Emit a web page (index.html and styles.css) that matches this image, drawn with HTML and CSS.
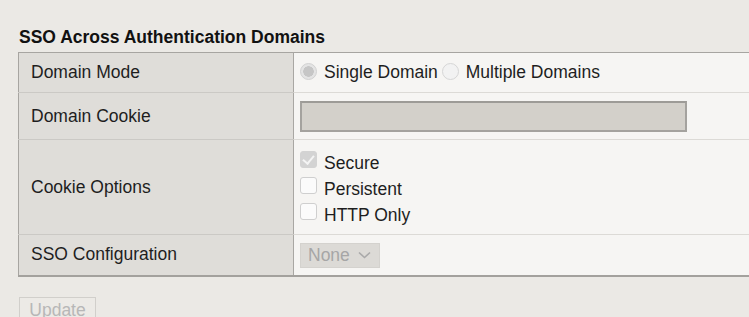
FILE: index.html
```html
<!DOCTYPE html>
<html lang="en">

<head>
    <meta charset="UTF-8">
    <meta name="viewport" content="width=device-width, initial-scale=1.0">
    <title>SSO Across Authentication Domains</title>
    <link rel="stylesheet" href="styles.css">
</head>

<body>
    <div class="section">
        <h2 class="section_title">SSO Across Authentication Domains</h2>

        <table class="settings">
            <tr class="row_mode">
                <th>Domain Mode</th>
                <td>
                    <label class="opt"><input type="radio" name="mode" checked disabled>Single Domain</label>
                    <label class="opt"><input type="radio" name="mode" disabled>Multiple Domains</label>
                </td>
            </tr>
            <tr class="row_cookie">
                <th>Domain Cookie</th>
                <td><input type="text" class="text_field" disabled></td>
            </tr>
            <tr class="row_options">
                <th>Cookie Options</th>
                <td>
                    <label class="check"><input type="checkbox" checked disabled>Secure</label>
                    <label class="check"><input type="checkbox" disabled>Persistent</label>
                    <label class="check"><input type="checkbox" disabled>HTTP Only</label>
                </td>
            </tr>
            <tr class="row_config">
                <th>SSO Configuration</th>
                <td>
                    <span class="select_box">None
                        <svg width="13" height="8" viewBox="0 0 13 8"><path d="M1 1.5 L6.5 6.5 L12 1.5" fill="none" stroke="#a9a9a9" stroke-width="1.6"/></svg>
                    </span>
                </td>
            </tr>
        </table>

        <button class="update_btn" disabled>Update</button>
    </div>
</body>

</html>
```

FILE: styles.css
```css
* {
    padding: 0;
    margin: 0;
    box-sizing: border-box;
}

html {
    overflow: hidden;
}

body {
    background-color: #ebe9e5;
    font-family: "Liberation Sans", Arial, sans-serif;
    font-size: 17.5px;
    color: #1e1e1e;
}

.section {
    padding: 27px 0 0 18px;
}

.section_title {
    font-size: 17.5px;
    line-height: 20px;
    font-weight: bold;
    color: #111;
    padding-left: 1px;
    margin-bottom: 5px;
}

.settings {
    width: 780px;
    border-collapse: collapse;
    border: 1px solid #a7a5a1;
    border-bottom: 2px solid #a3a19d;
}

.settings th {
    width: 275px;
    text-align: left;
    font-weight: normal;
    background-color: #dfddd9;
    padding: 0 12px;
    border-right: 1px solid #a9a7a3;
    border-bottom: 1px solid #cbc9c5;
}

.settings td {
    background-color: #f6f5f3;
    padding: 0 6px;
    border-bottom: 1px solid #dcdad6;
}

.row_mode th,
.row_mode td {
    height: 40px;
}

.row_mode td {
    padding-top: 2px;
}

.row_cookie th,
.row_cookie td {
    height: 47px;
}

.row_options th,
.row_options td {
    height: 95px;
}

.row_options td {
    padding-top: 4px;
}

.row_config th,
.row_config td {
    height: 41px;
    border-bottom: none;
}

.opt {
    display: inline-flex;
    align-items: center;
}

.opt input {
    appearance: none;
    width: 17px;
    height: 17px;
    border-radius: 50%;
    border: 1px solid #d6d6d6;
    background-color: #f2f2f2;
    margin: -3px 7px 0 0;
    position: relative;
}

.opt + .opt {
    margin-left: -1px;
}

.opt input:checked {
    background: radial-gradient(circle, #c6c6c6 0, #c6c6c6 5px, #e4e4e4 5.5px);
    border-color: #d2d2d2;
}

.text_field {
    display: block;
    width: 387px;
    height: 31px;
    background-color: #d3d0ca;
    border: 2px solid #a4a29e;
    border-top-color: #9d9b97;
}

.check {
    display: flex;
    align-items: center;
    height: 26px;
}

.check input {
    appearance: none;
    width: 17px;
    height: 17px;
    border: 1px solid #cfcfcf;
    border-radius: 3px;
    background-color: #fbfbfb;
    margin: -7px 7px 0 0;
    position: relative;
}

.check input:checked {
    background-color: #d3d3d3;
    border-color: #d3d3d3;
}

/* 打勾 */
.check input:checked::after {
    content: '';
    position: absolute;
    left: 4px;
    top: 1px;
    width: 5px;
    height: 9px;
    border-right: 2px solid #f4f4f4;
    border-bottom: 2px solid #f4f4f4;
    transform: rotate(40deg);
}

.select_box {
    display: inline-flex;
    align-items: center;
    gap: 8px;
    height: 25px;
    padding: 0 8px 0 7px;
    margin-top: 1px;
    background-color: #dcdad6;
    border: 1px solid #d4d2ce;
    color: #a6a6a6;
}

.update_btn {
    margin: 20px 0 0 1px;
    width: 77px;
    height: 26px;
    font-family: "Liberation Sans", Arial, sans-serif;
    font-size: 17.5px;
    color: #b7b7b7;
    background-color: #eceae6;
    border: 1px solid #d1cfcb;
    text-align: center;
    padding-top: 2px;
}
```
